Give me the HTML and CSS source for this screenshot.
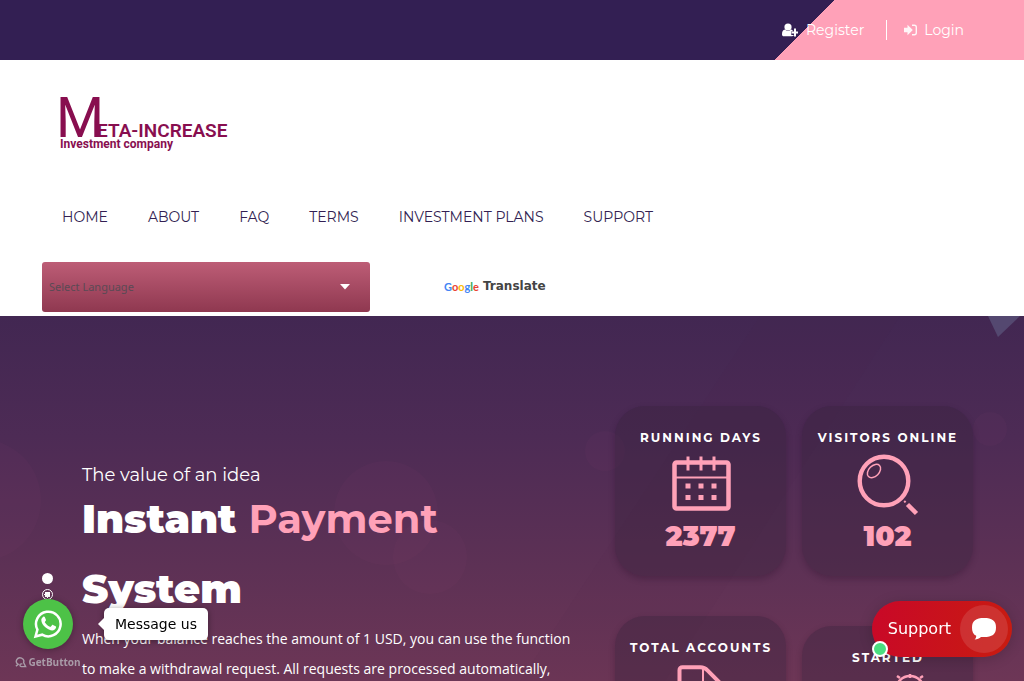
FILE: index.html
```html
<!DOCTYPE html>
<html lang="en">
<head>
<meta charset="utf-8">
<meta name="viewport" content="width=device-width, initial-scale=1">
<title>Meta-Increase Investment company</title>
<link rel="stylesheet" href="styles.css">
</head>
<body>
<div class="page">
  <div class="topbar">
    <div class="account">
      <a class="account-link" href="#">
        <svg width="16" height="14" viewBox="0 0 16 14" fill="#fff" aria-hidden="true"><circle cx="6" cy="4" r="3.6"/><path d="M3 6.600C.8 7 0 8.800 0 11.400 0 12.600.8 13.200 1.800 13.200h8.400c.8 0 1.400-.4 1.600-1.200H9.300V8.300H11C10.600 7.400 10 6.800 9 6.600 7.500 8.300 4.500 8.300 3 6.600z"/><path d="M12 5.500h2v3h2.200v2H14v3h-2v-3H9.600v-2H12z"/></svg>
        <span>Register</span>
      </a>
      <a class="account-link account-login" href="#">
        <svg width="13" height="12" viewBox="0 0 13 12" aria-hidden="true"><path fill="#fff" fill-opacity=".9" d="M0 3.800h3.500V.8L8.800 6l-5.300 5.200v-3H0z"/><path d="M8 1.200h2.300c1.200 0 2 .8 2 2v5.600c0 1.200-.8 2-2 2H8" fill="none" stroke="#fff" stroke-opacity=".9" stroke-width="1.400"/></svg>
        <span>Login</span>
      </a>
    </div>
  </div>

  <header class="header">
    <a class="logo" href="#" aria-label="Meta-Increase Investment company">
      <svg width="184" height="62" viewBox="0 0 184 62" fill="#880e4f">
        <text class="logo-initial" x="0" y="45">M</text>
        <text class="logo-name" x="41" y="45">ETA-INCREASE</text>
        <text class="logo-tag" x="4" y="56">Investment company</text>
      </svg>
    </a>
    <nav class="nav">
      <a href="#">HOME</a>
      <a href="#">ABOUT</a>
      <a href="#">FAQ</a>
      <a href="#">TERMS</a>
      <a href="#">INVESTMENT PLANS</a>
      <a href="#">SUPPORT</a>
    </nav>
    <div class="translate">
      <div class="select-wrap">
        <select class="language" aria-label="Language"><option>Select Language</option></select>
        <svg class="caret" width="10" height="6" viewBox="0 0 10 6" aria-hidden="true"><path d="M0 0h10L5 5.500z" fill="#fff"/></svg>
      </div>
      <a class="translate-brand" href="#"><span class="google"><span class="g-blue">G</span><span class="g-red">o</span><span class="g-yellow">o</span><span class="g-blue">g</span><span class="g-green">l</span><span class="g-red">e</span></span><span>Translate</span></a>
    </div>
  </header>

  <main class="hero">
    <svg class="decor" width="1024" height="365" viewBox="0 0 1024 365" preserveAspectRatio="xMaxYMin slice" aria-hidden="true">
      <path d="M988 0h32l-22 21z" fill="#544870"/>
      <g fill="#ff8fb0" fill-opacity=".022"><circle cx="-20" cy="184" r="61"/><circle cx="386" cy="197" r="52"/><circle cx="430" cy="241" r="37"/><circle cx="990" cy="113" r="17"/><circle cx="605" cy="135" r="20"/></g>
      <path d="M760 0L520 365h145L900 0z" fill="#4b2456" fill-opacity=".05"/>
    </svg>
    <div class="slide">
      <div class="dots">
        <button class="dot" aria-label="Slide 1"></button>
        <button class="dot dot-ring" aria-label="Slide 2"></button>
      </div>
      <div class="pitch">
        <p class="lead">The value of an idea</p>
        <h1 class="title">Instant <span>Payment</span><br>System</h1>
        <p class="copy">When your balance reaches the amount of 1 USD, you can use the function to make a withdrawal request. All requests are processed automatically,</p>
      </div>
    </div>
    <div class="stats">
      <section class="card">
        <h2>RUNNING DAYS</h2>
        <svg width="62" height="62" viewBox="0 0 62 62" fill="none" stroke="#ffa1b8" aria-hidden="true"><rect x="4.500" y="8.500" width="54" height="46" rx="2" stroke-width="4.500"/><path d="M6 23.500h51" stroke-width="1.800"/><path d="M18 2.500v14M31 2.500v14M44 2.500v14" stroke-width="3"/><path d="M15.500 32h5M28.500 32h5M41.500 32h5M15.500 43.500h5M28.500 43.500h5M41.500 43.500h5" stroke-width="5"/></svg>
        <strong>2377</strong>
      </section>
      <section class="card">
        <h2>VISITORS ONLINE</h2>
        <svg width="62" height="62" viewBox="0 0 62 62" fill="none" stroke="#ffa1b8" aria-hidden="true"><circle cx="27" cy="27" r="24.300" stroke-width="4.400"/><ellipse cx="17" cy="17" rx="7.800" ry="5.200" transform="rotate(-45 17 17)" stroke-width="1.500"/><path d="M47.200 47l1.400 1.400" stroke-width="2"/><path d="M50.500 50.500l9 9" stroke-width="4.500"/></svg>
        <strong>102</strong>
      </section>
      <section class="card">
        <h2>TOTAL ACCOUNTS</h2>
        <svg width="62" height="62" viewBox="0 0 62 62" fill="none" stroke="#ffa1b8" aria-hidden="true"><path d="M9.500 58V6c0-2 1-2.700 3-2.700h18c3 0 5 1 7 3L51 20v38z" stroke-width="4"/><path d="M33 5v16h17" stroke-width="2"/></svg>
      </section>
      <section class="card card-low">
        <h2>STARTED</h2>
        <svg width="106" height="62" viewBox="0 0 106 62" fill="none" stroke="#ffa1b8" aria-hidden="true"><circle cx="75" cy="16" r="14" stroke-width="2.500"/><path d="M75-1v5M65 4l-3-2M85 4l3-2" stroke-width="2.500"/></svg>
      </section>
    </div>
  </main>

  <div class="messenger">
    <a class="whatsapp" href="#" aria-label="WhatsApp">
      <svg width="30" height="30" viewBox="0 0 30 30" aria-hidden="true"><path d="M2.500 27.500l1.900-6.800A12.300 12.300 0 1 1 9.200 25.700z" fill="none" stroke="#fff" stroke-width="2.500"/><path d="M10.200 7.800c.5-.5 1.300-.4 1.600.3l1.100 2.600c.2.500 0 1-.9 2-.3.300-.2.600 0 .9 1.200 2 2.700 3.300 4.900 4.200.4.200.7.100 1-.2l1.100-1.400c.3-.4.600-.4 1-.2l2.600 1.300c.5.200.6.500.5 1-.3 2-2 3.200-3.900 3.200-3.700 0-10.900-5.200-10.900-10.500 0-1.300.9-2.400 1.900-3.200z" fill="#fff"/></svg>
    </a>
    <span class="tooltip">Message us</span>
    <a class="getbutton" href="#">
      <svg width="12" height="12" viewBox="0 0 13 12" fill="none" stroke="#a99ba8" stroke-width="1.500" aria-hidden="true"><path d="M3.500 8.500A4 3.800 0 1 1 9.300 6.500L11.500 11H7c-2 0-2.400-3 0-3h1M1 10.500l3-2.500"/></svg><span>GetButton</span>
    </a>
  </div>

  <button class="support">
    <span>Support</span>
    <span class="bubble"><svg width="26" height="24" viewBox="0 0 26 24" aria-hidden="true"><path d="M13 1c8 0 12 2.500 12 9.500S21 20 13 20c-1.200 0-2 0-3 .1-1.500 1.500-3.800 2.400-6.400 2.400 1.200-1 1.700-2.200 1.600-3.700C2 17.200 1 14.500 1 10.500 1 3.500 5 1 13 1z" fill="#fff"/></svg></span>
    <span class="online"></span>
  </button>
</div>
</body>
</html>
```
FILE: styles.css
```css
* { box-sizing: border-box; }
body { margin: 0; font-family: Montserrat, "Open Sans", sans-serif; font-size: 14px; color: #331f53; }
a { color: inherit; text-decoration: none; }
h1, h2, p { margin: 0; }
button { border: 0; padding: 0; font: inherit; cursor: pointer; }
.page { height: 100vh; display: flex; flex-direction: column; overflow: hidden; background: #fff; }

.topbar { display: flex; justify-content: flex-end; background: #331f53; }
.account { display: flex; align-items: center; height: 60px; padding: 0 60px 0 7px; color: #fff; background: linear-gradient(to right, #ffa1b8, #ffa1b8) 60px 0 no-repeat, linear-gradient(135deg, transparent 42px, #ffa1b8 42px); }
.account-link { display: flex; align-items: center; gap: 8px; height: 20px; }
.account-login { gap: 7px; margin-left: 22px; padding-left: 17px; border-left: 1px solid #fff; }

.header { display: flex; flex-direction: column; align-items: flex-start; padding: 32px 42px 4px; }
.logo { margin-left: 14px; }
.logo svg { display: block; overflow: visible; }
.logo-initial { font: 400 55px Roboto, sans-serif; }
.logo-name { font: 600 19px Roboto, sans-serif; }
.logo-tag { font: 700 12px Roboto, sans-serif; }
.nav { display: flex; gap: 40px; margin: 53px 20px 35px; line-height: 20px; }
.translate { display: flex; align-items: center; gap: 74px; width: 100%; font-family: "DejaVu Sans", sans-serif; }
.select-wrap { position: relative; width: 328px; }
.language { display: block; width: 100%; height: 50px; padding: 0 7px 2px; border: 0; border-radius: 3px; appearance: none; background: linear-gradient(#bd5d76, #8f3850); color: #5a4a55; font: 11px "Noto Sans", sans-serif; }
.caret { position: absolute; right: 20px; top: 22px; pointer-events: none; }
.translate-brand { display: flex; align-items: center; gap: 4px; padding-bottom: 2px; color: #444; font-size: 12px; font-weight: 700; }
.google { font: 700 11px Lato, sans-serif; }
.g-blue { color: #4285f4; }
.g-red { color: #ea4335; }
.g-yellow { color: #fbbc05; }
.g-green { color: #34a853; }

.hero { position: relative; flex: 1; min-height: 0; display: flex; justify-content: space-between; padding: 90px 51px 0 42px; overflow: hidden; background: linear-gradient(#422752 0, #4d2b55 120px, #5d3155 250px, #6d3656 365px); color: #fff; }
.decor { position: absolute; top: 0; right: 0; }
.slide { position: relative; display: flex; gap: 29px; padding-top: 54px; }
.dots { display: flex; flex-direction: column; gap: 5px; padding-top: 113px; }
.dot { width: 11px; height: 11px; border-radius: 50%; background: #fff; }
.dot-ring { border: 1px solid #fff; background: radial-gradient(#fff 3px, transparent 3px); }
.pitch { width: 500px; }
.lead { font-size: 18px; line-height: 30px; }
.title { font-size: 40px; font-weight: 900; line-height: 70px; margin-top: -6px; }
.title span { font-weight: 700; color: #ffa1b8; }
.copy { font: 14px/30px "Open Sans", sans-serif; }
.stats { position: relative; display: grid; grid-template-columns: 171px 171px; gap: 40px 16px; align-content: start; }
.card { display: flex; flex-direction: column; align-items: center; height: 170px; padding-top: 22px; border-radius: 30px; background: rgba(52, 32, 58, .36); box-shadow: 0 3px 6px rgba(30, 10, 35, .26); }
.card h2 { padding-left: 1px; font-size: 12px; line-height: 20px; font-weight: 700; letter-spacing: 2px; white-space: nowrap; }
.card svg { flex: none; margin: 6px 0 0 1px; }
.card strong { color: #ffa1b8; font-size: 28px; line-height: 40px; font-weight: 900; }
.card-low { margin-top: 10px; }

.messenger { position: fixed; left: 16px; bottom: 13px; display: grid; grid-template-columns: 64px auto; align-items: center; justify-items: center; column-gap: 24px; }
.whatsapp { display: grid; place-items: center; width: 50px; height: 50px; border-radius: 50%; background: #4dc247; box-shadow: 0 1px 7px rgba(0, 0, 0, .3); }
.tooltip { position: relative; padding: 7px 11px; border-radius: 5px; background: #fff; color: #000; font: 14px/18px "DejaVu Sans", sans-serif; box-shadow: 0 1px 6px rgba(0, 0, 0, .4); }
.tooltip::before { content: ""; position: absolute; left: -6px; top: 10px; border: 6px solid transparent; border-left: 0; border-right-color: #fff; }
.getbutton { display: flex; align-items: center; gap: 1px; margin-top: 7px; color: #a99ba8; font: 700 10px/12px "Open Sans", sans-serif; }
.support { position: fixed; right: 12px; bottom: 24px; display: flex; align-items: center; gap: 9px; padding: 4px 4px 4px 16px; border-radius: 28px; background: linear-gradient(100deg, #c90828, #c81c10); color: #fff; font: 16px/18px "DejaVu Sans", sans-serif; box-shadow: 0 2px 14px rgba(0, 0, 0, .18); }
.bubble { display: grid; place-items: center; width: 48px; height: 48px; border-radius: 50%; background: rgba(210, 75, 75, .5); }
.online { position: absolute; left: 0; bottom: 0; width: 16px; height: 16px; border: 2px solid #fff; border-radius: 50%; background: #4ade80; }
```
